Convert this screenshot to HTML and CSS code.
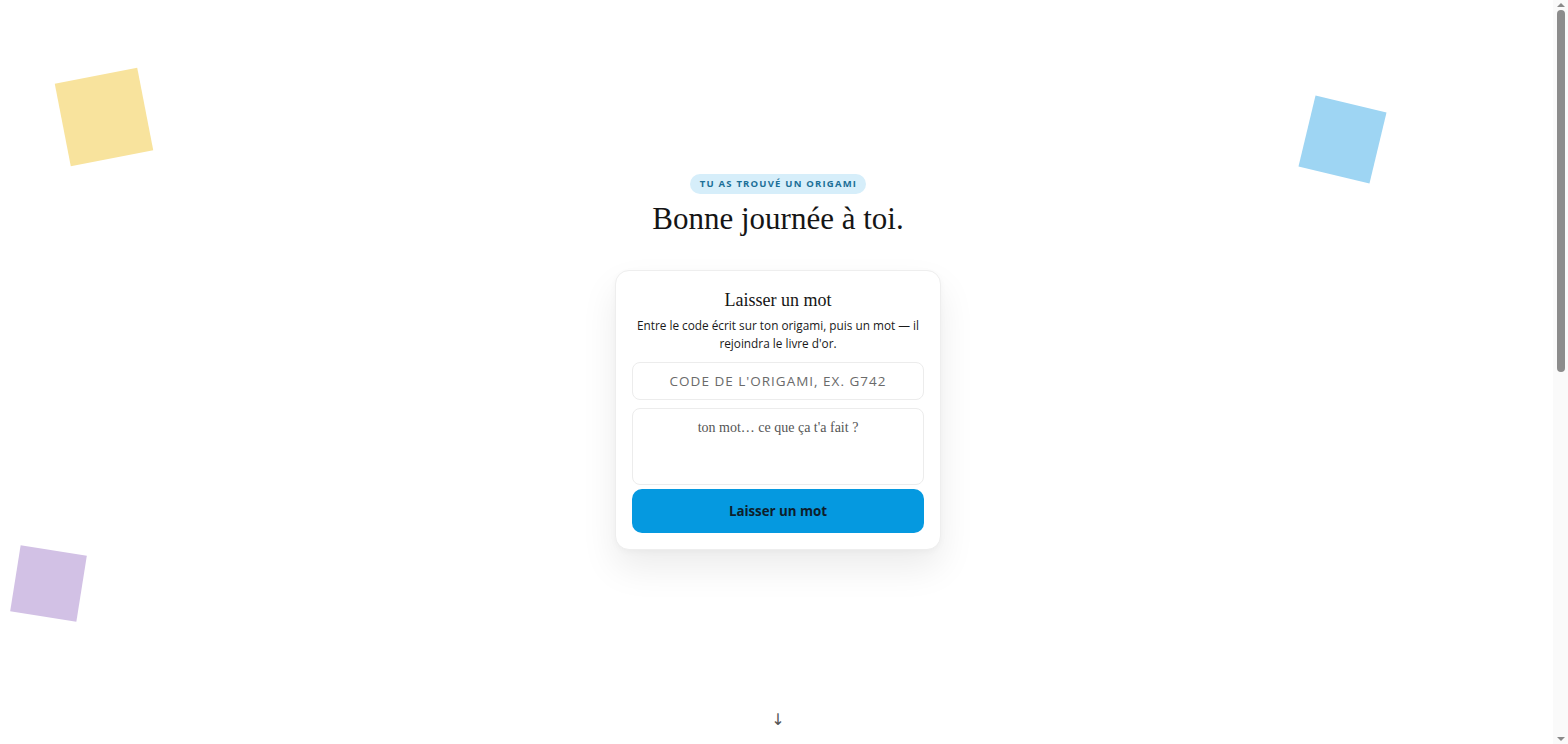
FILE: index.html
```html
<!DOCTYPE html>
<html lang="fr">
<head>
<meta charset="utf-8">
<title>Origami</title>
<link rel="stylesheet" href="styles.css">
</head>
<body>
<div class="paper paper-yellow"></div>
<div class="paper paper-blue"></div>
<div class="paper paper-purple"></div>
<section class="hero">
  <div class="hero-content">
    <span class="badge">TU AS TROUVÉ UN ORIGAMI</span>
    <h1 class="title">Bonne journée à toi.</h1>
    <form class="card">
      <h2 class="card-title">Laisser un mot</h2>
      <p class="card-desc">Entre le code écrit sur ton origami, puis un mot — il rejoindra le livre d'or.</p>
      <input class="code-input" type="text" placeholder="CODE DE L'ORIGAMI, EX. G742">
      <textarea class="msg-input" placeholder="ton mot… ce que ça t'a fait ?"></textarea>
      <button class="submit" type="button">Laisser un mot</button>
    </form>
  </div>
  <div class="arrow">↓</div>
</section>
<div class="scrollbar" aria-hidden="true">
  <span class="sb-arrow sb-up"></span>
  <span class="sb-thumb"></span>
  <span class="sb-arrow sb-down"></span>
</div>
</body>
</html>
```
FILE: styles.css
```css
* { box-sizing: border-box; }
html, body { margin: 0; padding: 0; background: #ffffff; }
body {
  font-family: "Noto Sans", "Open Sans", sans-serif;
  color: #1a1a1a;
  position: relative;
  height: 744px;
  overflow: hidden;
  padding-right: 12px;
}
.paper {
  position: absolute;
}
.paper-yellow {
  width: 84px; height: 84px;
  left: 62px; top: 75px;
  background: #f8e39d;
  transform: rotate(-11deg);
}
.paper-blue {
  width: 73px; height: 73px;
  left: 1306px; top: 103px;
  background: #9ed5f3;
  transform: rotate(13.5deg);
}
.paper-purple {
  width: 67px; height: 67px;
  left: 15px; top: 550px;
  background: #d2c1e5;
  transform: rotate(9deg);
}
.hero {
  height: 744px;
  display: flex;
  flex-direction: column;
  align-items: center;
  padding-top: 174px;
  padding-bottom: 14px;
}
.hero-content {
  display: flex;
  flex-direction: column;
  align-items: center;
}
.badge {
  display: inline-block;
  background: #d6eefa;
  color: #1b6f97;
  font-family: "Open Sans", sans-serif;
  font-weight: 700;
  font-size: 9.5px;
  letter-spacing: 1.2px;
  line-height: 20px;
  height: 20px;
  padding: 0 9px 0 10px;
  border-radius: 10px;
}
.title {
  margin: 5px 0 0;
  font-family: "Liberation Serif", "DejaVu Serif", serif;
  font-weight: 400;
  font-size: 31px;
  line-height: 40px;
  color: #151515;
}
.card {
  margin-top: 31px;
  width: 326px;
  background: #fff;
  border: 1px solid #eeeeee;
  border-radius: 14px;
  box-shadow: 0 18px 36px rgba(0,0,0,0.08), 0 2px 6px rgba(0,0,0,0.03);
  padding: 18px 16px 16px;
  display: flex;
  flex-direction: column;
  align-items: stretch;
}
.card-title {
  margin: 0;
  text-align: center;
  font-family: "Liberation Serif", "DejaVu Serif", serif;
  font-weight: 400;
  font-size: 18px;
  line-height: 22px;
  color: #151515;
}
.card-desc {
  margin: 5px 0 0;
  text-align: center;
  font-family: "Open Sans", sans-serif;
  font-size: 11.8px;
  line-height: 18px;
  color: #1a1a1a;
}
.code-input {
  margin-top: 10px;
  height: 38px;
  width: 100%;
  border: 1px solid #ececec;
  border-radius: 8px;
  background: #fff;
  text-align: center;
  font-family: "Open Sans", sans-serif;
  font-size: 13.5px;
  letter-spacing: 1px;
  color: #333;
  outline: none;
}
.code-input::placeholder { color: #6a6a6a; }
.msg-input {
  margin-top: 8px;
  height: 77px;
  width: 100%;
  border: 1px solid #ececec;
  border-radius: 8px;
  background: #fff;
  resize: none;
  padding: 10px 12px;
  text-align: center;
  font-family: "Liberation Serif", "DejaVu Serif", serif;
  font-size: 14px;
  line-height: 17px;
  color: #333;
  outline: none;
  display: block;
}
.msg-input::placeholder { color: #555; }
.submit {
  margin-top: 4px;
  height: 44px;
  width: 100%;
  border: none;
  border-radius: 10px;
  background: #0599e0;
  color: #0e1e2c;
  font-family: "Open Sans", sans-serif;
  font-weight: 700;
  font-size: 13.3px;
  cursor: pointer;
}
.arrow {
  margin-top: auto;
  font-family: "DejaVu Sans", sans-serif;
  font-size: 16px;
  line-height: 20px;
  color: #555;
}
.scrollbar {
  position: fixed;
  top: 0;
  right: 0;
  width: 15px;
  height: 744px;
  background: #fafafa;
  display: flex;
  flex-direction: column;
  align-items: center;
}
.sb-arrow {
  width: 0;
  height: 0;
  border-left: 4px solid transparent;
  border-right: 4px solid transparent;
}
.sb-up {
  margin-top: 3px;
  border-bottom: 4px solid #8a8a8a;
}
.sb-thumb {
  margin-top: 3px;
  width: 8px;
  height: 362px;
  border-radius: 4px;
  background: #8c8c8c;
}
.sb-down {
  margin-top: auto;
  margin-bottom: 3px;
  border-top: 4px solid #8a8a8a;
}
```
